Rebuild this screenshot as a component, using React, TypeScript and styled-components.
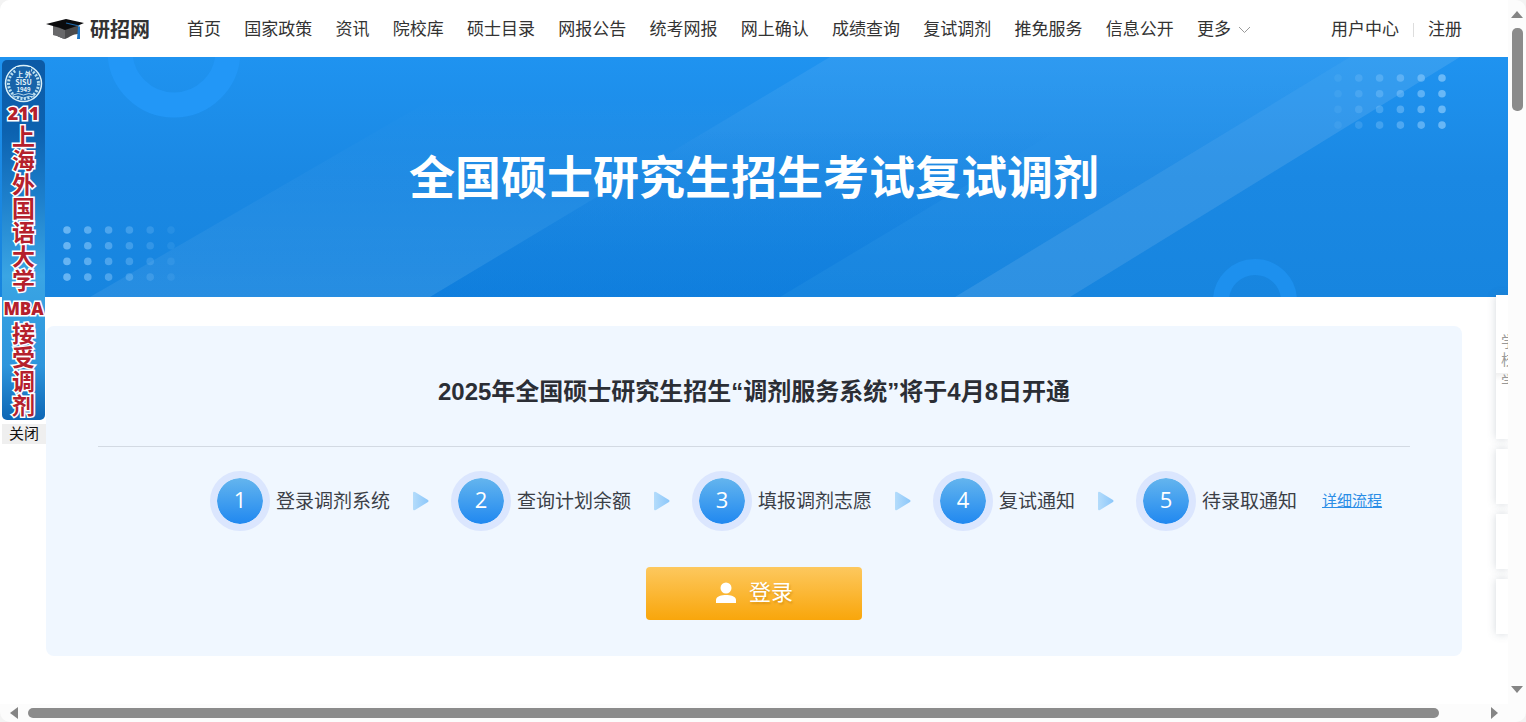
import React from 'react';
import styled, { createGlobalStyle } from 'styled-components';

const sans = `"Liberation Sans", "Noto Sans CJK SC", sans-serif`;
const cjk = `"Noto Sans CJK SC", sans-serif`;

const GlobalStyle = createGlobalStyle`
  * { box-sizing: border-box; }
  html, body { margin: 0; height: 100%; }
  #root { height: 100%; }
  body { background: #f3f3f3; color: #333; font-family: ${sans}; font-size: 17px; }
  h1, h2, ol, ul { margin: 0; padding: 0; font-weight: inherit; list-style: none; }
  a { color: inherit; text-decoration: none; }
  button { border: 0; padding: 0; font: inherit; cursor: pointer; }
`;

const Shell = styled.div`
  display: grid;
  grid-template-columns: minmax(0, 1fr) 18px;
  grid-template-rows: minmax(0, 1fr) 18px;
  height: 100vh;
  min-height: 660px;
  border-radius: 10px;
  overflow: hidden;
  background: #fcfcfc;
`;

const Page = styled.div`
  position: relative;
  overflow: hidden;
  background: #fff;
`;

const Header = styled.header`
  display: flex;
  align-items: center;
  height: 57px;
  padding: 2px 46px 0;
  white-space: nowrap;
  line-height: 24px;
`;

const Logo = styled.a`
  display: flex;
  align-items: center;
  gap: 5px;
  margin-right: 37px;
  padding-bottom: 2px;
  color: #333;
  font-family: ${cjk};
  font-size: 20px;
  font-weight: 700;
`;

const Nav = styled.nav`
  display: flex;
  justify-content: space-between;
  flex: 1;
  margin-right: 80px;
`;

const NavLink = styled.a`
  display: flex;
  align-items: center;
  gap: 7px;
`;

const Account = styled.div`
  display: flex;
  align-items: center;
  gap: 14px;
`;

const Divider = styled.span`
  width: 1px;
  height: 14px;
  background: #ddd;
`;

const Hero = styled.section`
  position: relative;
  display: flex;
  align-items: center;
  justify-content: center;
  height: 240px;
  padding-top: 2px;
  background: #1886e1;
`;

const HeroArt = styled.svg`
  position: absolute;
  inset: 0;
  width: 100%;
  height: 100%;
`;

const HeroTitle = styled.h1`
  position: relative;
  color: #fff;
  font-size: 46px;
  font-weight: 700;
  line-height: 64px;
  white-space: nowrap;
`;

const Panel = styled.main`
  margin: 29px 46px 0;
  padding: 43px 52px 36px;
  border-radius: 8px;
  background: #f0f7ff;
`;

const PanelTitle = styled.h2`
  padding-bottom: 31px;
  border-bottom: 1px solid #d3dae3;
  color: #2b2e35;
  font-size: 24px;
  font-weight: 700;
  line-height: 46px;
  text-align: center;
`;

const Steps = styled.ol`
  display: flex;
  align-items: center;
  justify-content: center;
  margin-top: 24px;
  padding-left: 84px;
  white-space: nowrap;
`;

const Step = styled.li`
  display: flex;
  align-items: center;
  color: #3b3f47;
  font-size: 19px;
  line-height: 28px;
`;

const StepNumber = styled.span`
  display: flex;
  align-items: center;
  justify-content: center;
  width: 60px;
  height: 60px;
  margin-right: 6px;
  padding-bottom: 4px;
  border: 7px solid #dbe6fe;
  border-radius: 50%;
  background: linear-gradient(#64b5ee, #2088f0) padding-box;
  color: #fff;
  font-family: "Open Sans", ${sans};
  font-size: 22px;
  font-weight: 500;
`;

const StepLabel = styled.span`
  padding-top: 2px;
`;

const StepArrow = styled.svg`
  width: 16px;
  height: 20px;
  margin: 0 22px 0 23px;
`;

const DetailLink = styled.a`
  color: #2a8de6;
  font-size: 15px;
  text-decoration: underline;
  margin-left: 25px;
`;

const LoginButton = styled.button`
  display: flex;
  align-items: center;
  justify-content: center;
  gap: 12px;
  width: 216px;
  height: 53px;
  margin: 36px auto 0;
  padding-bottom: 2px;
  border-radius: 4px;
  background: linear-gradient(#fdc85e, #f9a60b);
  color: #fff;
  font-size: 22px;
  line-height: 28px;
  text-shadow: 1px 2px 2px rgba(190, 120, 0, 0.45);
`;

const Advert = styled.aside`
  position: absolute;
  top: 60px;
  left: 2px;
  display: flex;
  flex-direction: column;
  gap: 4px;
`;

const AdvertCard = styled.a`
  display: flex;
  flex-direction: column;
  align-items: center;
  width: 43px;
  height: 360px;
  padding-top: 4px;
  border-radius: 5px;
  background: linear-gradient(#0b5aa6, #0c62b0 20%, #1d7fcb 38%, #3aa5e4 60%, #2d95dc 85%, #0d66b5);
`;

const AdvertText = styled.span`
  color: #b5202c;
  font-family: ${cjk};
  font-size: 23px;
  line-height: 24px;
  font-weight: 700;
  paint-order: stroke fill;
  -webkit-text-stroke: 3px #fff;
`;

const AdvertLatin = styled(AdvertText)<{ $size: number; $line: number }>`
  font-family: "Open Sans", ${sans};
  font-size: ${(p) => p.$size}px;
  line-height: ${(p) => p.$line}px;
  font-weight: 800;
`;

const AdvertDegree = styled(AdvertLatin)`
  padding-top: 7px;
`;

const CloseButton = styled.button`
  width: 44px;
  height: 20px;
  background: #efefef;
  color: #111;
  font-size: 15px;
  line-height: 20px;
`;

const Rail = styled.aside`
  position: absolute;
  top: 295px;
  right: 0;
  display: flex;
  flex-direction: column;
  gap: 10px;
  width: 12px;
`;

const RailCard = styled.a`
  height: 55px;
  background: #fff;
  box-shadow: 0 0 8px rgba(80, 100, 120, 0.25);
`;

const RailSchools = styled(RailCard)`
  height: 144px;
  padding: 38px 0 0 5px;
  overflow: hidden;
  color: #999;
  font-size: 15px;
  line-height: 18px;
`;

const RailText = styled.span`
  display: block;
  width: 15px;
`;

const RailNext = styled.span`
  display: block;
  height: 11px;
  margin: 4px 0 0 -5px;
  padding-left: 5px;
  overflow: hidden;
  background: linear-gradient(#f1f1f1, #fff 8px);
`;

const VerticalBar = styled.div`
  display: flex;
  flex-direction: column;
  align-items: center;
  justify-content: space-between;
  padding: 11px 0;
`;

const HorizontalBar = styled.div`
  display: flex;
  align-items: center;
  gap: 10px;
  padding: 0 10px;
`;

const Thumb = styled.div<{ $vertical?: boolean }>`
  border-radius: 5px;
  background: #8b8b8b;
  ${(p) =>
    p.$vertical
      ? 'width: 11px; height: 83px; margin: 10px 0 auto;'
      : 'flex: 1; height: 10px; margin-right: 42px;'}
`;

const Arrow = ({ d, w, h }: { d: string; w: number; h: number }) => (
  <svg width={w} height={h} viewBox={`0 0 ${w} ${h}`} aria-hidden="true">
    <path d={d} fill="#858585" />
  </svg>
);

const Cap = () => (
  <svg width="39" height="22" viewBox="0 0 39 22" aria-hidden="true">
    <path d="M7 8v9c4 0 7 3 12 4 5-2 8-5 13-5V8z" fill="#4b4b4d" />
    <path d="M7 8l12 4v9c-5-1-8-4-12-4z" fill="#68686a" />
    <path d="M0 6L20 1l18 4-7 3-12 4q-6-3-12-4z" fill="#0b0b0d" />
    <path d="M20 5l13 3v4" fill="none" stroke="#1d65a5" strokeWidth="1.2" />
    <path d="M32 9h2v12h-3z" fill="#1b74c5" />
  </svg>
);

const Seal = () => (
  <svg width="39" height="39" viewBox="0 0 39 39" aria-hidden="true">
    <circle cx="19.5" cy="19.5" r="18" fill="#1763a9" stroke="#d9f0f8" strokeWidth="1.5" />
    <circle cx="19.5" cy="19.5" r="15" fill="none" stroke="#b9dff0" strokeWidth="3" strokeDasharray="2 1.5" />
    <path d="M12 3h15v8H12z" fill="#1763a9" />
    <g fill="#e6f6fb" textAnchor="middle" fontFamily="Noto Sans CJK SC" fontWeight="700">
      <text x="20" y="13" fontSize="7">上 外</text>
      <text x="19.5" y="21" fontSize="7">SISU</text>
      <text x="19.5" y="28" fontSize="6">1949</text>
    </g>
    <path d="M9 31q5-3 10.500 0 5.500-3 10.500 0v2q-5-2-10.500 1Q14 31 9 33z" fill="#1763a9" stroke="#d9f0f8" strokeWidth=".8" />
  </svg>
);

const Dots = ({ x, y, fadeLeft }: { x: number; y: number; fadeLeft?: boolean }) => (
  <g fill="#9bd3ff">
    {Array.from({ length: 24 }, (_, i) => {
      const col = i % 6;
      const level = fadeLeft ? col : 5 - col;
      return (
        <circle
          key={i}
          cx={x + col * 20.8}
          cy={y + Math.floor(i / 6) * 15.7}
          r="3.8"
          opacity={0.1 + level * 0.1}
        />
      );
    })}
  </g>
);

const HeroBackground = () => (
  <HeroArt viewBox="0 0 1508 240" preserveAspectRatio="xMidYMid slice" aria-hidden="true">
    <defs>
      <linearGradient id="sky" x1="0" y1="0" x2="0" y2="1">
        <stop offset="0" stopColor="#1f93f0" />
        <stop offset=".5" stopColor="#1a88e3" />
        <stop offset="1" stopColor="#1785df" />
      </linearGradient>
      <linearGradient id="beam" x1="0" y1="0" x2="0" y2="1">
        <stop offset=".15" stopColor="#fff" stopOpacity="0" />
        <stop offset="1" stopColor="#fff" stopOpacity=".07" />
      </linearGradient>
      <linearGradient id="haze" x1="0" y1="0" x2="0" y2="1">
        <stop offset="0" stopColor="#fff" stopOpacity=".07" />
        <stop offset="1" stopColor="#fff" stopOpacity="0" />
      </linearGradient>
      <linearGradient id="deep" x1="0" y1="0" x2="0" y2="1">
        <stop offset=".3" stopColor="#0878dc" stopOpacity="0" />
        <stop offset="1" stopColor="#0878dc" stopOpacity=".5" />
      </linearGradient>
    </defs>
    <path d="M0 0h1508v240H0z" fill="url(#sky)" />
    <path d="M90 240L505 0H830L430 240z" fill="url(#beam)" />
    <path d="M430 240L830 0h520L955 240z" fill="url(#haze)" />
    <path d="M430 240L830 0h350L780 240z" fill="url(#deep)" />
    <path d="M955 240L1350 0h110L1070 240z" fill="#fff" opacity=".1" />
    <circle cx="174" cy="-6" r="54" fill="none" stroke="#2297f7" strokeWidth="25" />
    <circle cx="1255" cy="244" r="34" fill="none" stroke="#1d90ee" strokeWidth="16" />
    <Dots x={67} y={173} />
    <Dots x={1338} y={21} fadeLeft />
  </HeroArt>
);

const navItems = ['首页', '国家政策', '资讯', '院校库', '硕士目录', '网报公告', '统考网报', '网上确认', '成绩查询', '复试调剂', '推免服务', '信息公开'];
const steps = ['登录调剂系统', '查询计划余额', '填报调剂志愿', '复试通知', '待录取通知'];

export default function App() {
  return (
    <>
      <GlobalStyle />
      <Shell>
        <Page>
          <Header>
            <Logo href="#">
              <Cap />
              研招网
            </Logo>
            <Nav>
              {navItems.map((item) => (
                <NavLink href="#" key={item}>{item}</NavLink>
              ))}
              <NavLink href="#">
                更多
                <svg width="13" height="8" viewBox="0 0 13 8" aria-hidden="true">
                  <path d="M1 1l5.500 5.500L12 1" fill="none" stroke="#999" />
                </svg>
              </NavLink>
            </Nav>
            <Account>
              <a href="#">用户中心</a>
              <Divider />
              <a href="#">注册</a>
            </Account>
          </Header>

          <Hero>
            <HeroBackground />
            <HeroTitle>全国硕士研究生招生考试复试调剂</HeroTitle>
          </Hero>

          <Panel>
            <PanelTitle>2025年全国硕士研究生招生“调剂服务系统”将于4月8日开通</PanelTitle>
            <Steps>
              {steps.map((label, i) => (
                <Step key={label}>
                  <StepNumber>{i + 1}</StepNumber>
                  <StepLabel>{label}</StepLabel>
                  {i < steps.length - 1 ? (
                    <StepArrow viewBox="0 0 16 20" aria-hidden="true">
                      <defs>
                        <linearGradient id={`arrow${i}`}>
                          <stop offset="0" stopColor="#b4dcfb" />
                          <stop offset="1" stopColor="#8cc7fa" />
                        </linearGradient>
                      </defs>
                      <path d="M0 2q0-2 2-1l13 8q1 1 0 2L2 19q-2 1-2-1z" fill={`url(#arrow${i})`} />
                    </StepArrow>
                  ) : (
                    <DetailLink href="#">详细流程</DetailLink>
                  )}
                </Step>
              ))}
            </Steps>
            <LoginButton type="button">
              <svg width="22" height="22" viewBox="0 0 22 22" fill="#fff" aria-hidden="true">
                <circle cx="11" cy="6" r="5.500" />
                <path d="M1 21v-3c0-4 6-5 10-5s10 1 10 5v3z" />
              </svg>
              登录
            </LoginButton>
          </Panel>

          <Advert>
            <AdvertCard href="#">
              <Seal />
              <AdvertLatin $size={18} $line={20}>211</AdvertLatin>
              {[...'上海外国语大学'].map((c) => (
                <AdvertText key={c}>{c}</AdvertText>
              ))}
              <AdvertDegree $size={17} $line={22}>MBA</AdvertDegree>
              {[...'接受调剂'].map((c) => (
                <AdvertText key={c}>{c}</AdvertText>
              ))}
            </AdvertCard>
            <CloseButton type="button">关闭</CloseButton>
          </Advert>

          <Rail>
            <RailSchools href="#">
              <RailText>学</RailText>
              <RailText>校</RailText>
              <RailNext>学</RailNext>
            </RailSchools>
            <RailCard href="#" />
            <RailCard href="#" />
            <RailCard href="#" />
          </Rail>
        </Page>

        <VerticalBar>
          <Arrow d="M6 0l6 7H0z" w={12} h={7} />
          <Thumb $vertical />
          <Arrow d="M0 0h12L6 7z" w={12} h={7} />
        </VerticalBar>
        <HorizontalBar>
          <Arrow d="M8 0v12L0 6z" w={8} h={12} />
          <Thumb />
          <Arrow d="M0 0v12l7-6z" w={7} h={12} />
        </HorizontalBar>
      </Shell>
    </>
  );
}
